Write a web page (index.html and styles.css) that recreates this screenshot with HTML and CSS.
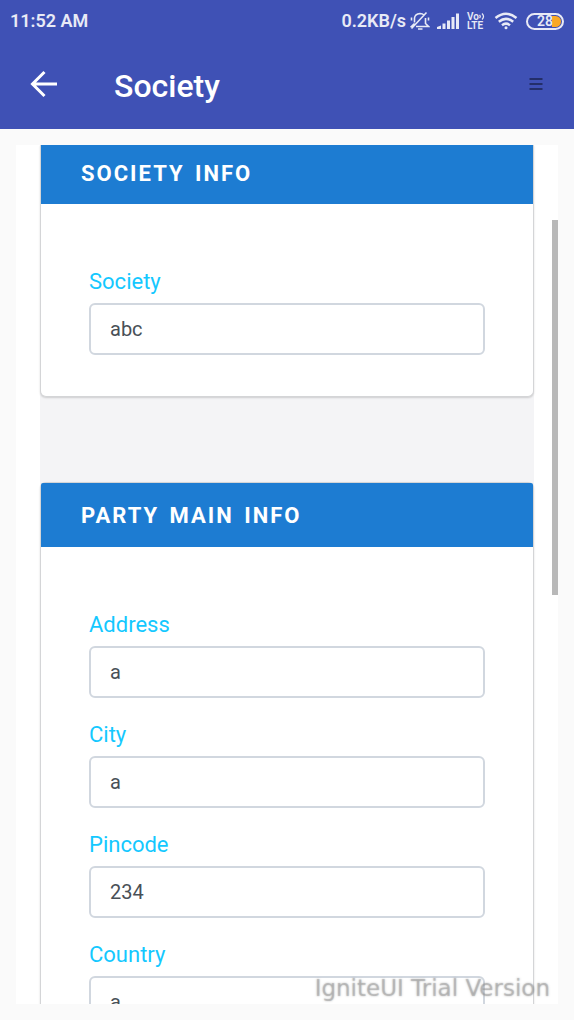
FILE: index.html
```html
<!DOCTYPE html>
<html lang="en">
<head>
<meta charset="utf-8">
<meta name="viewport" content="width=device-width, initial-scale=1">
<title>Society</title>
<link rel="stylesheet" href="styles.css">
</head>
<body class="app">
<div class="status">
  <span>11:52 AM</span>
  <div class="status-icons">
    <span>0.2KB/s</span>
    <svg class="bell" width="20" height="20" viewBox="0 0 20 20" fill="none" stroke="currentColor" stroke-width="1.6">
      <path d="M4.500 11.500V7Q5 3 10 2.500Q12.500 2.500 14 4M15.500 7V12.500L18.500 15.500H6M4.500 12.500L1.500 15.500H3M8 18H12.500M1.500 17.500L16.500 1.500M1.500 6.500V9.500M18.500 6.500V9.500"/>
    </svg>
    <svg class="signal" width="23" height="17" viewBox="0 0 23 17" fill="currentColor">
      <path d="M0 16V14L4 12.500V16ZM5.500 10.500H8.500V16H5.500ZM10 7.500H13V16H10ZM14.500 4H17.500V16H14.500ZM19 0.500H22V16H19Z"/>
    </svg>
    <span class="volte"><span class="vo">Vo<svg width="6" height="7" viewBox="0 0 6 7" fill="none" stroke="currentColor" stroke-width="1.2"><path d="M0.500 2Q2 3.500 0.500 5M3 0.500Q6 3.500 3 6.500"/></svg></span><span>LTE</span></span>
    <svg class="wifi" width="24" height="18" viewBox="0 0 24 18" fill="none" stroke="currentColor" stroke-width="2.500">
      <path d="M1.500 6Q12-2.500 22.500 6M4.800 9.700Q12 4 19.200 9.700M8 13.200Q12 10 16 13.200"/>
      <circle cx="12" cy="15.800" r="1.500" fill="currentColor" stroke="none"/>
    </svg>
    <span class="battery"><span class="charge"></span><span class="level">28</span></span>
  </div>
</div>
<header class="toolbar">
  <button class="icon-button" type="button" aria-label="Back">
    <svg width="28" height="28" viewBox="0 0 28 28" fill="none" stroke="currentColor" stroke-width="3"><path d="M27 14H3M14.500 2L2.500 14L14.500 26"/></svg>
  </button>
  <h1 class="title">Society</h1>
  <button class="icon-button menu" type="button" aria-label="Menu">
    <svg width="14" height="14" viewBox="0 0 14 14" fill="none" stroke="currentColor" stroke-width="1.500"><path d="M0.500 2H13.500M0.500 7H13.500M0.500 12H13.500"/></svg>
  </button>
</header>
<main class="page">
  <div class="viewport">
    <form class="forms">
      <section class="card card-scrolled">
        <h2 class="card-title">SOCIETY INFO</h2>
        <div class="card-body">
          <div class="field"><label class="label" for="society">Society</label><input class="input" id="society" type="text" value="abc"></div>
        </div>
      </section>
      <section class="card">
        <h2 class="card-title">PARTY MAIN INFO</h2>
        <div class="card-body">
          <div class="field"><label class="label" for="address">Address</label><input class="input" id="address" type="text" value="a"></div>
          <div class="field"><label class="label" for="city">City</label><input class="input" id="city" type="text" value="a"></div>
          <div class="field"><label class="label" for="pincode">Pincode</label><input class="input" id="pincode" type="text" value="234"></div>
          <div class="field"><label class="label" for="country">Country</label><input class="input" id="country" type="text" value="a"></div>
        </div>
      </section>
    </form>
    <div class="scroll-thumb"></div>
    <div class="watermark">IgniteUI Trial Version</div>
  </div>
</main>
</body>
</html>
```
FILE: styles.css
```css
* {
  box-sizing: border-box;
}

.app {
  margin: 0;
  height: 100vh;
  display: flex;
  flex-direction: column;
  overflow: hidden;
  background: #fafafa;
  font-family: Roboto, sans-serif;
}

.status {
  height: 40px;
  flex: none;
  display: flex;
  align-items: center;
  justify-content: space-between;
  padding: 2px 10px 0;
  background: #3f51b5;
  color: #e8eaf6;
  font-size: 18px;
  font-weight: 600;
  line-height: 24px;
}

.status-icons {
  display: flex;
  align-items: center;
}

.bell {
  margin-left: 4px;
}

.signal {
  margin-left: 7px;
}

.volte {
  display: flex;
  flex-direction: column;
  margin-left: 7px;
  font-size: 10px;
  line-height: 9px;
}

.vo {
  display: flex;
  align-items: center;
}

.wifi {
  margin-left: 9px;
}

.battery {
  position: relative;
  width: 38px;
  height: 17px;
  margin-left: 8px;
  border: 2px solid #e8eaf6;
  border-radius: 9px;
  overflow: hidden;
  text-align: center;
  font-size: 14px;
  line-height: 13px;
}

.charge {
  position: absolute;
  top: 1px;
  right: 1px;
  bottom: 1px;
  width: 9px;
  border-radius: 0 6px 6px 0;
  background: #f9a825;
}

.level {
  position: relative;
}

.toolbar {
  height: 89px;
  flex: none;
  display: flex;
  align-items: center;
  padding: 0 31px 2px 30px;
  background: #3f51b5;
  color: #fff;
}

.icon-button {
  display: flex;
  padding: 0;
  border: 0;
  background: none;
  color: inherit;
}

.menu {
  color: #1b2350;
}

.title {
  flex: 1;
  margin: 0;
  padding: 4px 0 0 56px;
  font-size: 32px;
  font-weight: 500;
  line-height: 40px;
}

.page {
  flex: 1;
  min-height: 0;
  padding: 16px;
}

.viewport {
  position: relative;
  height: 100%;
  padding: 0 24px;
  overflow: hidden;
  background: #fff;
}

.forms {
  display: flex;
  flex-direction: column;
  gap: 85px;
  background: #f4f4f6;
}

.card {
  border: 1px solid #d4d5d7;
  border-radius: 6px;
  background: #fff;
  box-shadow: 0 1px 2px rgba(0, 0, 0, 0.16);
}

.card-title {
  margin: 0;
  padding: 17px 40px 15px;
  border-radius: 2px 2px 0 0;
  background: #1d7cd2;
  color: #fff;
  font-size: 22px;
  font-weight: 700;
  line-height: 32px;
  letter-spacing: 2px;
  word-spacing: 3px;
}

.card-scrolled {
  border-top: 0;
  border-radius: 0 0 6px 6px;
}

.card-scrolled .card-title {
  padding-top: 13px;
  padding-bottom: 14px;
  border-radius: 0;
}

.card-body {
  padding: 57px 48px 25px;
}

.field {
  margin-bottom: 16px;
}

.label {
  display: block;
  color: #14c8ff;
  font-size: 22px;
  line-height: 42px;
}

.input {
  display: block;
  width: 100%;
  height: 52px;
  padding: 0 19px;
  border: 2px solid #d1d7df;
  border-radius: 6px;
  background: #fff;
  color: #495057;
  font-family: inherit;
  font-size: 20px;
}

.scroll-thumb {
  position: absolute;
  top: 75px;
  right: 0;
  width: 6px;
  height: 375px;
  background: #b8b8b8;
}

.watermark {
  position: absolute;
  right: 8px;
  bottom: 2px;
  color: rgba(150, 150, 150, 0.4);
  font-family: Verdana, "DejaVu Sans", sans-serif;
  font-size: 23px;
  line-height: 28px;
  text-shadow: 0 0 2px rgba(110, 110, 110, 0.5);
}
```
